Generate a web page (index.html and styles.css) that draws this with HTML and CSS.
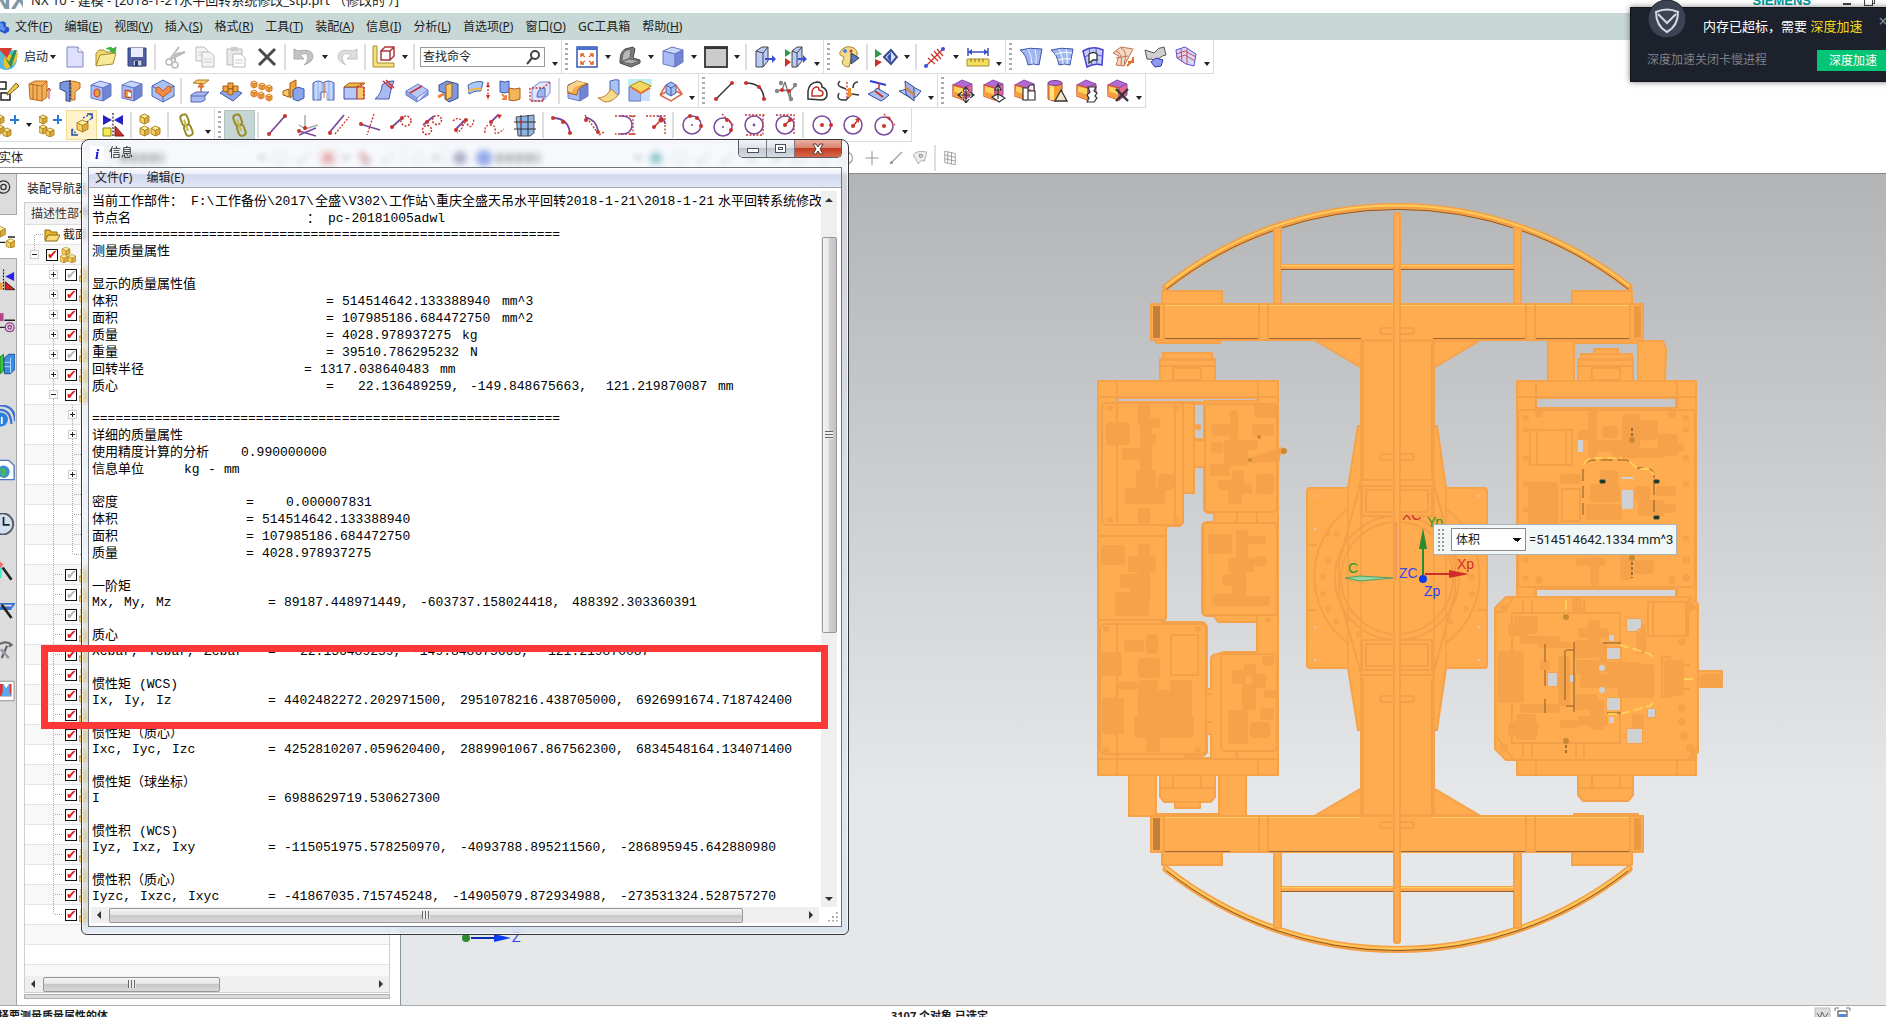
FILE: index.html
```html
<!DOCTYPE html>
<html lang="zh-CN">
<head>
    <meta charset="UTF-8">
    <meta name="viewport" content="width=device-width, initial-scale=1.0">
    <title>NX 10 - 建模</title>
    <link rel="stylesheet" href="styles.css">
</head>
<body>
    <header class="titlebar">
        <span class="nx-mark">NX</span>
        <span class="title-text">NX 10 - 建模 - [2018-1-21水平回转系统修改_stp.prt （修改的 ）]</span>
        <span class="siemens">SIEMENS</span>
        <span class="app-min"></span>
        <span class="app-restore"></span>
    </header>

    <nav class="menubar" id="menubar">
        <svg class="menu-logo" viewBox="0 0 12 18"><path d="M0 3l4-1 3 2v4l4 2v4l-5 3-6-3z" fill="#2456c8"/><path d="M0 4l4 1v4l3 1-2 4-5-2z" fill="#5f93ee"/></svg>
    </nav>

    <div class="toolbar" id="bar1"></div>
    <div class="toolbar" id="bar2"></div>
    <div class="toolbar" id="bar3"></div>
    <div class="toolbar selection-bar" id="bar4"></div>

    <main class="workspace">
        <div class="resource-bar" id="resources"></div>
        <aside class="navigator">
            <h2 class="nav-title">装配导航器</h2>
            <div class="tree">
                <div class="tree-head">描述性部件名</div>
                <div class="tree-rows" id="tree"></div>
                <div class="scroll-h">
                    <i class="arrow left"></i>
                    <div class="thumb nav-thumb"><i class="ridges"></i></div>
                    <i class="arrow right"></i>
                </div>
            </div>
            <div class="nav-foot"></div>
        </aside>
        <section class="viewport">
            <svg id="model" viewBox="401 174 1485 831" preserveAspectRatio="xMinYMin meet">
                <defs>
                    <clipPath id="half"><rect x="1400" y="515" width="24" height="10"/></clipPath>
                </defs>
                <!-- arched rails -->
                <g fill="none" stroke-linecap="round">
                    <path class="rail" d="M1166 287A373 373 0 0 1 1629 287M1166 869A373 373 0 0 0 1629 869"/>
                    <path class="rail-dark" d="M1167 289A373 373 0 0 1 1628 289M1167 871A373 373 0 0 0 1628 871"/>
                    <path class="rail-light" d="M1166 286A373 373 0 0 1 1629 286M1166 868A373 373 0 0 0 1629 868"/>
                </g>
                <g class="body">
                    <path d="M1274 228h7v76h-7zM1514 228h7v76h-7zM1274 852h7v76h-7zM1514 852h7v76h-7z"/>
                    <path d="M1281 265h233v4H1281zM1281 887h233v4H1281z"/>
                    <!-- upper beam and column -->
                    <path d="M1162 291h60v13h-60zM1572 291h60v13h-60zM1162 852h60v13h-60zM1572 852h60v13h-60z"/>
                    <path d="M1156 340h64v3h-64zM1574 340h64v3h-64zM1156 814h64v3h-64zM1574 814h64v3h-64z"/>
                    <path d="M1316 341h163l-44 26h-75zM1316 815h163l-44-26h-75z"/>
                    <rect x="1307" y="488" width="180" height="180" rx="3"/>
                    <path d="M1358 426h79l9 62v180l-9 62h-79l-10-62v-180z"/>
                    <rect x="1361" y="341" width="73" height="474"/>
                    <rect x="1151" y="304" width="492" height="36"/>
                    <rect x="1151" y="816" width="492" height="36"/>
                    <!-- left frame -->
                    <path d="M1129 775h27v41h-27zM1219 775h27v41h-27zM1160 359h55v22h-55zM1163 353h49v7h-49zM1160 775h55v22l-4 5h-47l-4-5zM1175 802h25v6h-25z"/>
                    <path fill-rule="evenodd" d="M1098 381h180v394h-180zM1117 398v4h83v2l5-3h52v-3zM1194 404v35h10v-35zM1194 467V493H1183V522L1180 526H1166V618L1162 622H1200Q1207 622 1207 629V689H1211V660Q1211 654 1218 654L1224 652H1257V622H1218L1214 616H1207Q1202 616 1202 610V528Q1202 522 1208 522H1214V513H1210Q1204 513 1204 507V467zM1207 734v18q-1 4-7 4h-15v2h26v-24z"/>
                    <!-- right frame -->
                    <path d="M1548 341h26v40h-26zM1638 341h25l3 8-1 32h-27zM1578 359h55v22h-55zM1581 354h51v6h-51zM1594 349h24v5h-24zM1578 775h55v20l-5 6h-45l-5-6zM1698 671h24v16h-24z"/>
                    <path fill-rule="evenodd" d="M1517 381h179v394h-179zM1536 398v10h140v-10zM1536 589v8h140v-8z"/>
                    <path fill-rule="evenodd" d="M1506 597h184l8 7v148l-8 8h-184l-11-11v-141zM1627 619v12h10l4-5v-7zM1607 648v11h14v-11zM1607 698v11h14v-11zM1548 673v13h9v-13zM1627 729v14h15v-14zM1648 709v8h7v-8zM1609 635v6h5v-6zM1570 675v7h5v-7zM1600 667v4h5v-4zM1600 688v4h5v-4z"/>
                </g>
                <path fill="#9b6534" d="M1281 269h233v1h-233zM1281 891h233v1h-233zM1165 338h94v1h-94zM1268 338h93v1h-93zM1433 338h93v1h-93zM1535 338h94v1h-94zM1165 851h65v1h-65zM1268 851h258v1h-258zM1535 851h94v1h-94z"/>
                <path fill="#ffd05a" d="M1165 305h464v1h-464zM1165 817h194v1h-194zM1433 817h196v1h-196zM1281 265h233v1h-233zM1281 887h233v1h-233z"/>
                <path fill="#c17f39" d="M1153 306h7v32h-7zM1153 818h7v32h-7z"/>
                <path fill="#eb9943" d="M1634 306h7v32h-7zM1634 818h7v32h-7z"/>
                <g class="seam">
                    <path d="M1164 304v36M1259 304v36M1268 304v36M1526 304v36M1535 304v36M1630 304v36M1164 816v36M1259 816v36M1268 816v36M1526 816v36M1535 816v36M1630 816v36"/>
                    <path d="M1363 341v138M1432 341v138M1363 678v137M1432 678v137M1361 480h73M1361 675h73"/>
                    <rect x="1362" y="486" width="70" height="30"/><rect x="1366" y="490" width="62" height="22"/>
                    <rect x="1362" y="640" width="70" height="30"/><rect x="1366" y="644" width="62" height="22"/>
                    <circle cx="1397" cy="578" r="56"/><circle cx="1397" cy="578" r="62"/>
                    <path d="M1349 508a84 84 0 0 0 0 136M1445 508a84 84 0 0 1 0 136M1361 480l-22 84v30l22 80M1433 480l22 84v30l-22 80M1307 545h10M1307 610h10M1477 545h10M1477 610h10"/>
                    <rect x="1380" y="454" width="34" height="6" rx="3"/><rect x="1380" y="696" width="34" height="6" rx="3"/>
                    <rect x="1380" y="328" width="34" height="6" rx="3"/><rect x="1380" y="822" width="34" height="6" rx="3"/>
                    <path d="M1098 397h180M1117 381v21M1258 381v22M1098 759h180M1117 759v16M1258 759v16M1117 402v120M1117 622v136"/>
                    <path d="M1517 397h179M1536 381v27M1677 381v27M1517 760h179M1536 760v15M1677 760v15M1536 589v8M1677 589v8"/>
                    <rect x="1102" y="403" width="81" height="122" rx="4"/><rect x="1183" y="403" width="11" height="90"/>
                    <path d="M1175 403v122M1194 440h10M1194 467h10"/>
                    <rect x="1205" y="404" width="72" height="108" rx="4"/><rect x="1098" y="536" width="68" height="84" rx="3"/>
                    <rect x="1203" y="523" width="74" height="92" rx="3"/><rect x="1100" y="624" width="106" height="130" rx="5"/>
                    <rect x="1221" y="654" width="56" height="97" rx="4"/><path d="M1257 615v38M1237 513v10M1257 513v10M1237 751v8M1204 694h8M1204 722h8"/>
                    <rect x="1171" y="635" width="27" height="40"/><rect x="1173" y="368" width="28" height="12"/><rect x="1173" y="775" width="28" height="13"/>
                    <rect x="1592" y="368" width="28" height="12"/><rect x="1592" y="775" width="28" height="13"/>
                    <path d="M1160 366h55M1578 366h55M1160 788h55M1578 788h55"/>
                    <rect x="1518" y="410" width="177" height="177" rx="4"/><rect x="1530" y="430" width="42" height="35"/><path d="M1537 430v35M1566 430v35"/>
                    <rect x="1562" y="489" width="18" height="32"/><path d="M1495 612h8l10-14M1497 737l16 22M1698 612l-10-14M1698 747l-10 12"/>
                    <rect x="1512" y="613" width="108" height="130"/><rect x="1648" y="602" width="40" height="34"/><path d="M1653 602v34M1686 602v34M1523 600v12M1532 600v12M1576 600v12M1584 600v12M1523 745v12M1532 745v12M1576 745v12M1584 745v12"/>
                    <path d="M1690 665h-20v-8h-8v40h8v-8h20M1698 679h16"/>
                </g>
                <g class="lump" id="lumps"></g>
                <g fill="#cfd1d3">
                    <path d="M1578 440h5v12h-5zM1622 490h11v19h-11zM1622 477h11v2h-11zM1627 619h14v8l-5 4h-9zM1607 648h13v11h-13zM1607 698h13v12h-13zM1548 673h9v13h-9zM1627 729h15v14h-15zM1648 709h7v8h-7zM1609 635h5v6h-5zM1609 717h5v6h-5zM1570 675h4v7h-4z"/>
                    <circle cx="1602" cy="668" r="3"/><circle cx="1602" cy="690" r="3"/>
                    <circle cx="1315" cy="496" r="1"/><circle cx="1315" cy="529" r="1"/><circle cx="1315" cy="627" r="1"/><circle cx="1315" cy="660" r="1"/><circle cx="1479" cy="496" r="1"/><circle cx="1479" cy="627" r="1"/><circle cx="1479" cy="660" r="1"/>
                </g>
                <!-- hoses and probes -->
                <g fill="none" stroke="#8a5a26">
                    <path stroke-dasharray="12 5" d="M1583 515v-45q1-10 12-10h32l10 8h10q7 1 7 8v40"/>
                    <path d="M1545 644v18M1545 670v16M1545 699v14M1565 650v50M1574 642v70M1566 650h8M1566 706h8M1607 713h14M1603 643h18" />
                </g>
                <path fill="none" stroke="#ffcf58" stroke-width="2" stroke-dasharray="9 4" d="M1584 465q2-6 10-7h28M1630 462l8 7h12l4 6M1620 645l14 4 16 5 5 6M1608 714h12l30-8 6-7M1566 600v14M1684 679h9"/>
                <path fill="#0f2f2a" stroke="#3d4d35" d="M1600 480h5v3h-5zM1654 480h5v3h-5zM1654 516h5v3h-5z"/>
                <g fill="#c98a35"><circle cx="1632" cy="440" r="3"/><circle cx="1632" cy="558" r="3"/><circle cx="1566" cy="617" r="3"/><circle cx="1566" cy="741" r="3"/><circle cx="1284" cy="451" r="3"/><circle cx="1259" cy="437" r="2"/><circle cx="1250" cy="460" r="2"/></g>
                <path stroke="#40301c" stroke-dasharray="3 2" d="M1632 428v8M1632 562v16M1566 745v10"/>
                <rect class="post" x="1394" y="213" width="6" height="730" rx="2"/>
                <!-- coordinate systems -->
                <path d="M1396 522v58" stroke="#dc8a78" stroke-width="1"/>
                <path d="M1345 578l15-2 33 2-33 3z" fill="#8fd8a0" stroke="#5c9e62"/>
                <g class="axis-name">
                    <text x="1348" y="573" fill="#1f9a1f">C</text>
                    <text x="1399" y="578" fill="#3a46f0">ZC</text>
                    <text x="1402" y="520" fill="#d03030" clip-path="url(#half)">XC</text>
                    <text x="1427" y="527" fill="#1f9a1f">Yp</text>
                    <text x="1457" y="569" fill="#d03030">Xp</text>
                    <text x="1424" y="596" fill="#2a40f0">Zp</text>
                    <text x="512" y="942" fill="#2a40f0">Z</text>
                </g>
                <path d="M1423 575v-30" stroke="#2b8a2b" stroke-width="2"/><path d="M1423 528l4 21h-8z" fill="#2b8a2b"/>
                <path d="M1425 574h28" stroke="#d02c2c" stroke-width="2"/><path d="M1449 570l20 4-20 4z" fill="#d02c2c"/>
                <circle cx="1423" cy="579" r="4" fill="#0a3cf0"/>
                <circle cx="466" cy="938" r="4" fill="#2b8a2b"/><path d="M471 938h24" stroke="#0a2cb0" stroke-width="2"/><path d="M494 934l17 4-17 4z" fill="#0a3cf0"/>
            </svg>
            <form class="measure-box">
                <i class="grip-dots"></i>
                <label class="sr-only" for="measure">测量</label>
                <select id="measure"><option>体积</option></select>
                <output for="measure">=514514642.1334 mm^3</output>
            </form>
        </section>
    </main>

    <footer class="statusbar">
        <span class="prompt">选择要测量质量属性的体</span>
        <span class="selected">3107 个对象 已选定</span>
        <svg class="status-icons" viewBox="0 0 40 18"><rect x="1" y="1" width="15" height="15" fill="#ddd" stroke="#bbb"/><path d="M3 6l3 5 2-6 3 6 3-5" stroke="#666" fill="none"/><path d="M21 4V1h4M32 1h4v3" stroke="#777" fill="none"/><rect x="24" y="4" width="9" height="10" fill="#fff" stroke="#333"/><rect x="25" y="7" width="7" height="7" fill="#4d86d8"/></svg>
    </footer>

    <section class="window">
        <header class="window-title">
            <span class="info-icon">i</span>
            <h1>信息</h1>
            <div class="window-buttons">
                <button type="button" aria-label="最小化"><i class="glyph-min"></i></button>
                <button type="button" aria-label="最大化"><i class="glyph-max"></i></button>
                <button type="button" class="close" aria-label="关闭"><svg viewBox="0 0 14 12"><path d="M2 1h3l2 3 2-3h3L9 6l3 5H9L7 8l-2 3H2l3-5z" fill="#fff" stroke="#5a3a3a"/></svg></button>
            </div>
        </header>
        <div class="window-client">
            <nav class="window-menu">
                <button type="button">文件(F)</button>
                <button type="button">编辑(E)</button>
            </nav>
            <div class="window-body">
                <div class="listing" id="listing"></div>
                <div class="scroll-v">
                    <i class="arrow up"></i>
                    <div class="thumb listing-thumb"><i class="ridges"></i></div>
                    <i class="arrow down"></i>
                </div>
            </div>
            <div class="window-foot">
                <div class="scroll-h">
                    <i class="arrow left"></i>
                    <div class="thumb wide-thumb"><i class="ridges"></i></div>
                    <i class="arrow right"></i>
                </div>
                <i class="size-grip"></i>
            </div>
        </div>
    </section>

    <div class="highlight"></div>

    <aside class="toast">
        <svg class="toast-logo" viewBox="0 0 40 40"><circle cx="20" cy="20" r="19" fill="#3c4453" stroke="#1b2029"/><path d="M9 13q11-5 22 0 0 14-11 20Q9 27 9 13z" fill="none" stroke="#d5d9e6" stroke-width="2"/><path d="M11 15l9 9 9-9" fill="none" stroke="#d5d9e6" stroke-width="2"/></svg>
        <p class="toast-title">内存已超标，需要 <em>深度加速</em></p>
        <button type="button" class="toast-close" aria-label="关闭">×</button>
        <p class="toast-note">深度加速关闭卡慢进程</p>
        <button type="button" class="toast-action">深度加速</button>
    </aside>

    <script src="app.js"></script>
</body>
</html>
```

FILE: styles.css
```css
* {
    box-sizing: border-box;
}
body {
    margin: 0;
    height: 100vh;
    overflow: hidden;
    display: flex;
    flex-direction: column;
    position: relative;
    background: #fff;
    color: #1c1c1c;
    font: 12px/16px "Noto Sans", "Noto Sans CJK SC", sans-serif;
}
button, select, input {
    font: inherit;
    color: inherit;
}
button {
    padding: 0;
    border: 0;
    background: none;
}
h1, h2, p {
    margin: 0;
    font-weight: normal;
}
svg {
    display: block;
}
.sr-only {
    position: absolute;
    width: 1px;
    height: 1px;
    overflow: hidden;
    clip-path: inset(50%);
}

/* title and menu */
.titlebar {
    flex: none;
    display: flex;
    align-items: center;
    height: 26px;
    margin-top: -13px;
    padding-right: 13px;
    font-size: 13px;
    white-space: nowrap;
}
.nx-mark {
    width: 31px;
    margin-left: -8px;
    color: #7f98a5;
    font: bold 26px/26px "Liberation Sans", sans-serif;
    overflow: hidden;
}
.title-text {
    flex: 1;
    padding-left: 8px;
}
.siemens {
    color: #009999;
    font: bold 13px/13px "Liberation Sans", sans-serif;
    margin-right: 32px;
}
.app-min {
    width: 8px;
    height: 2px;
    margin: 8px 13px 0 0;
    background: #444;
}
.app-restore {
    width: 9px;
    height: 8px;
    margin: 4px 0 0;
    border: 1px solid #444;
    box-shadow: 2px -2px 0 -1px #fff, 2px -2px 0 0 #444;
}
.menubar {
    flex: none;
    display: flex;
    align-items: center;
    gap: 12px;
    height: 27px;
    background: #c8d8d6;
}
.menu-logo {
    width: 10px;
    height: 16px;
    margin-right: -7px;
}

/* toolbars */
.toolbar {
    flex: none;
    display: flex;
    height: 34px;
}
.group {
    display: flex;
    align-items: center;
    border: solid #dcdcdc;
    border-width: 0 1px 1px 0;
}
.tool {
    width: 31px;
    height: 30px;
    display: flex;
    align-items: center;
    justify-content: center;
}
.tool svg {
    width: 24px;
    height: 24px;
}
.toolbar > .group:first-child .tool:first-child {
    margin-left: -8px;
}
.tool.hot {
    background: #fff1c9;
    border: 1px solid #f5d98a;
}
.tool.on {
    background: #c5d6d4;
    border: 1px solid #b3c5c3;
}
.launch {
    display: flex;
    align-items: center;
    width: 47px;
    gap: 4px;
    white-space: nowrap;
}
.launch svg {
    flex: none;
    width: 20px;
    height: 26px;
}
.caret, .more {
    width: 12px;
    height: 4px;
    display: flex;
    justify-content: center;
}
.caret::before, .more::before {
    content: "";
    border: 3px solid transparent;
    border-top: 4px solid #222;
    border-bottom: 0;
}
.more {
    margin-top: 14px;
}
.sep {
    width: 2px;
    height: 26px;
    margin: 0 2px;
    background: #dedede;
}
.grip {
    width: 3px;
    height: 27px;
    margin: 0 3px;
    background: repeating-linear-gradient(#aaa 0 2px, transparent 2px 5px);
}
.finder {
    display: flex;
    align-items: center;
    width: 125px;
    height: 20px;
    margin: 0 4px 0 3px;
    border: 1px solid #9a9a9a;
}
.finder input {
    width: 100px;
    padding: 0 2px;
    border: 0;
    outline: 0;
}
.finder input::placeholder {
    color: #1c1c1c;
    opacity: 1;
}
.finder svg {
    width: 16px;
    height: 16px;
    margin-left: 4px;
}
.selection-bar {
    height: 31px;
}
.selection-bar .group {
    border: 0;
}
.filter {
    width: 120px;
    height: 20px;
    margin: 0 8px 0 -8px;
    padding: 0 6px;
    border: 1px solid #9a9a9a;
    background: #fff;
    appearance: none;
}
.selection-bar .tool {
    width: 24px;
}
.selection-bar .tool svg {
    width: 18px;
    height: 18px;
}
.smear {
    width: 44px;
    height: 10px;
    margin-right: 92px;
    background: repeating-linear-gradient(90deg, #777 0 7px, #eee 7px 10px);
}

/* workspace */
.workspace {
    flex: 1;
    display: flex;
    min-height: 0;
    border-top: 1px solid #87898c;
}
.resource-bar {
    width: 17px;
    background: #dcdcdc;
    border-right: 1px solid #a8a8a8;
}
.resource {
    display: flex;
    align-items: center;
    width: 16px;
    height: 40px;
}
.resource.tall {
    height: 54px;
}
.resource.mid {
    height: 42px;
}
.resource.current {
    height: 45px;
    width: 17px;
    background: #fff;
    border: solid #a8a8a8;
    border-width: 1px 0;
}
.resource:first-child {
    align-items: flex-start;
    padding-top: 2px;
}
.resource.mid + .tall {
    margin-top: 4px;
}
.resource svg {
    width: 15px;
    height: 22px;
}
.navigator {
    display: flex;
    flex-direction: column;
    width: 384px;
    padding: 6px 10px 6px 7px;
    border-right: 1px solid #87959c;
    background: #fff;
}
.nav-title {
    padding: 0 3px;
    font-size: 12px;
    line-height: 17px;
}
.tree {
    flex: 1;
    display: flex;
    flex-direction: column;
    min-height: 0;
    margin-top: 5px;
    border: 1px solid #cfcfcf;
}
.tree-head {
    height: 22px;
    padding: 0 6px;
    border-bottom: 1px solid #ddd;
    background: #f3f3f3;
    font-size: 12px;
    line-height: 21px;
    color: #333;
}
.tree-rows {
    flex: 1;
    min-height: 0;
    overflow: hidden;
}
.tree-row {
    display: flex;
    align-items: center;
    height: 20px;
    border-bottom: 1px solid #e4e4e4;
    line-height: 18px;
}
.tree-row:nth-child(even) {
    background: #f8f8f8;
}
.cell {
    display: flex;
    align-items: center;
    justify-content: center;
    align-self: stretch;
    width: 19px;
    background: repeating-linear-gradient(#aaa 0 1px, transparent 1px 2px) 9px 0 / 1px 100% no-repeat;
}
.cell.none {
    background: none;
}
.cell.start {
    background-position: 9px 10px;
}
.cell.end {
    background-size: 1px 10px;
}
.cell.twig::after {
    content: "";
    width: 8px;
    height: 1px;
    margin-left: 10px;
    background: repeating-linear-gradient(90deg, #aaa 0 1px, transparent 1px 2px);
}
.toggle {
    width: 9px;
    height: 9px;
    border: 1px solid #cfcfcf;
    background: linear-gradient(#222, #222) center / 5px 1px no-repeat, #fff;
}
.toggle.plus {
    background: linear-gradient(#222, #222) center / 5px 1px no-repeat, linear-gradient(#222, #222) center / 1px 5px no-repeat, #fff;
}
.tree-row input {
    appearance: none;
    width: 12px;
    height: 12px;
    margin: 0 2px;
    border: 1px solid #111;
    background: #fff;
    font: bold 13px/10px "DejaVu Sans", sans-serif;
    color: #e01414;
}
.tree-row input::before {
    content: "✔";
}
.tree-row input:disabled {
    color: #b5b5b5;
}
.tree-row svg {
    width: 16px;
    height: 16px;
}
.tree-row .folder {
    margin-right: 3px;
}
.nav-foot {
    height: 5px;
    margin-top: 1px;
    border: 1px solid #b0b0b0;
    background: #dcdcdc;
}
.viewport {
    flex: 1;
    position: relative;
    min-width: 0;
    overflow: hidden;
    background: linear-gradient(#b3b4b6, #e6e7e9 75%);
}
#model {
    width: 100%;
    height: 100%;
}

/* model shading */
.rail {
    stroke: #f4a045;
    stroke-width: 7;
}
.rail-dark {
    stroke: #8f5c28;
    stroke-width: 1;
}
.rail-light {
    stroke: #ffcb5c;
    stroke-width: 2;
}
.body {
    fill: #ffab4f;
    stroke: #f6a24b;
    stroke-width: 2;
    stroke-linejoin: round;
}
.seam {
    fill: none;
    stroke: #f3a04a;
    stroke-width: 2;
}
.lump {
    fill: #f6a24b;
}
.post {
    fill: #ffab4f;
    stroke: #f3a04a;
    stroke-width: 2;
}
.axis-name {
    font: 14px "Liberation Sans", sans-serif;
}
.measure-box {
    position: absolute;
    left: 1032px;
    top: 350px;
    display: flex;
    align-items: center;
    width: 244px;
    height: 31px;
    padding: 0 3px;
    border: 1px solid #a9b2b4;
    background: #f1f6f6;
}
.grip-dots {
    flex: none;
    width: 8px;
    height: 23px;
    margin-right: 6px;
    background: radial-gradient(circle, #999 1px, transparent 1px) 0 0 / 4px 4px;
}
.measure-box select {
    flex: none;
    width: 75px;
    height: 23px;
    padding: 0 4px;
    border: 1px solid #8c8c8c;
    border-radius: 0;
    appearance: none;
    background: conic-gradient(from -45deg at 50% 4px, #111 90deg, transparent 0) 61px 9px / 8px 4px no-repeat, #fff;
}
.measure-box output {
    margin-left: 3px;
    font: 13px/16px "Roboto", sans-serif;
    white-space: nowrap;
}

/* scroll bars */
.scroll-h, .scroll-v {
    display: flex;
    align-items: center;
    background: #efefef;
}
.scroll-h {
    flex: 1;
    height: 16px;
}
.tree .scroll-h {
    flex: none;
}
.scroll-v {
    flex-direction: column;
    width: 16px;
    margin-right: 4px;
}
.thumb {
    display: flex;
    align-items: center;
    justify-content: center;
    border: 1px solid #979797;
    border-radius: 2px;
}
.scroll-h .thumb {
    height: 15px;
    background: linear-gradient(#f4f4f4, #e2e2e2 50%, #c8c8ca 50%, #d8d8da);
}
.scroll-v .thumb {
    width: 15px;
    background: linear-gradient(90deg, #f4f4f4, #e6e6e6 50%, #cfcfd1 50%, #c4c4c6);
}
.nav-thumb {
    width: 177px;
}
.wide-thumb {
    width: 634px;
}
.listing-thumb {
    height: 396px;
    margin-top: 29px;
}
.ridges {
    width: 8px;
    height: 8px;
    background: repeating-linear-gradient(90deg, #666 0 1px, #eee 1px 3px);
}
.scroll-v .ridges {
    background: repeating-linear-gradient(#666 0 1px, #eee 1px 3px);
}
.arrow {
    border: 4px solid transparent;
}
.arrow.left {
    margin: 0 8px 0 6px;
    border-right-color: #333;
    border-left-width: 0;
}
.arrow.right {
    margin: 0 6px 0 auto;
    border-left-color: #333;
    border-right-width: 0;
}
.arrow.up {
    margin: 7px 0 6px;
    border-bottom-color: #333;
    border-top-width: 0;
}
.arrow.down {
    margin: auto 0 6px;
    border-top-color: #333;
    border-bottom-width: 0;
}

/* status */
.statusbar {
    flex: none;
    display: flex;
    height: 12px;
    border-top: 1px solid #a9acae;
    font-size: 11px;
    font-weight: bold;
    overflow: hidden;
}
.statusbar span {
    line-height: 20px;
}
.prompt {
    width: 904px;
    margin-left: -13px;
    white-space: nowrap;
}
.status-icons {
    width: 40px;
    height: 18px;
    margin: 1px 32px 0 auto;
}

/* information window */
.window {
    position: absolute;
    left: 81px;
    top: 139px;
    width: 768px;
    height: 796px;
    display: flex;
    flex-direction: column;
    padding: 0 6px 7px;
    border: 1px solid #34383d;
    border-radius: 8px 8px 6px 6px;
    background: linear-gradient(rgba(238, 243, 250, .5), rgba(214, 226, 240, .6));
    backdrop-filter: blur(3px);
    box-shadow: inset 0 0 0 1px rgba(255, 255, 255, .7);
}
.window-title {
    flex: none;
    display: flex;
    height: 27px;
    padding-left: 2px;
}
.info-icon {
    width: 14px;
    height: 16px;
    margin: 6px 5px 0 0;
    background: #fff;
    color: #1414e0;
    text-align: center;
    font: italic bold 15px/16px "Liberation Serif", serif;
}
.window-title h1 {
    margin-top: 5px;
    font-size: 12px;
    line-height: 16px;
}
.window-buttons {
    display: flex;
    height: 18px;
    margin-left: auto;
    border: 1px solid #585d66;
    border-top: 0;
    border-radius: 0 0 5px 5px;
    overflow: hidden;
}
.window-buttons button {
    display: flex;
    align-items: center;
    justify-content: center;
    width: 28px;
    border-right: 1px solid #777c85;
    background: linear-gradient(#f3f5f8, #dfe3e9 45%, #bfc6d0 50%, #d8dde4);
}
.window-buttons .close {
    width: 46px;
    border: 0;
    background: linear-gradient(#e9b0a2, #d98670 45%, #c23b22 50%, #d8694c);
}
.window-buttons svg {
    width: 14px;
    height: 12px;
}
.glyph-min {
    width: 12px;
    height: 5px;
    margin-top: 4px;
    border: 1px solid #4a4f5c;
    background: #fff;
}
.glyph-max {
    width: 11px;
    height: 9px;
    border: 1px solid #4a4f5c;
    background: #fff;
    box-shadow: inset 0 0 0 2px #fff, inset 0 0 0 3px #4a4f5c;
}
.window-client {
    flex: 1;
    display: flex;
    flex-direction: column;
    min-height: 0;
    padding-bottom: 3px;
    border: 1px solid #70757d;
    background: #fff;
}
.window-menu {
    display: flex;
    gap: 14px;
    height: 20px;
    padding: 0 6px;
    border-bottom: 1px solid #a4a7ae;
    background: linear-gradient(#fdfdfe, #edf0f8 30%, #d4daee 35%, #e0e6f6);
}
.window-body {
    flex: 1;
    display: flex;
    min-height: 0;
    padding-top: 3px;
}
.listing {
    flex: 1;
    min-width: 0;
    padding: 1px 0 0 3px;
    overflow: hidden;
    white-space: pre;
    color: #000;
    font-family: "Liberation Mono", "Noto Sans CJK SC", monospace;
    font-size: 13px;
}
.line {
    display: flex;
    height: 16px;
    line-height: 18px;
}
.line.cjk {
    height: 17px;
    line-height: 19px;
}
.run {
    flex: none;
}
.window-foot {
    display: flex;
    padding-left: 2px;
}
.size-grip {
    width: 22px;
    height: 16px;
    background: radial-gradient(circle, #aaa 1px, transparent 1px) 4px 4px / 4px 4px;
    clip-path: polygon(85% 20%, 85% 90%, 30% 90%);
}
.highlight {
    position: absolute;
    left: 41px;
    top: 645px;
    width: 787px;
    height: 84px;
    border: 7px solid #fb3737;
    pointer-events: none;
}

/* memory notice */
.toast {
    position: absolute;
    right: -24px;
    top: 7px;
    width: 280px;
    height: 75px;
    padding: 11px 20px 0 16px;
    display: grid;
    grid-template-columns: 56px 1fr auto;
    grid-template-rows: 31px 21px;
    background: #1d212c;
    border: 1px solid #10131a;
    box-shadow: 0 0 6px rgba(0, 0, 0, .5);
    color: #fff;
}
.toast-logo {
    width: 40px;
    height: 40px;
    margin-top: -20px;
}
.toast-title {
    font-size: 13px;
    line-height: 15px;
    white-space: nowrap;
}
.toast-title em {
    font-style: normal;
    color: #f7da1c;
}
.toast-close {
    align-self: start;
    color: #888d98;
    font-size: 16px;
    line-height: 4px;
}
.toast-note {
    grid-column: 1 / 3;
    color: #7c808a;
    line-height: 20px;
    white-space: nowrap;
}
.toast-action {
    width: 72px;
    height: 21px;
    margin-left: -60px;
    background: #04c476;
    line-height: 20px;
}
```

FILE: app.js
```js
// ---- icon drawing helpers, everything sits on a 24x24 grid ----
const p = (d, fill = 'none', stroke = 'none', w = 1) =>
    `<path d="${d}" fill="${fill}" stroke="${stroke}" stroke-width="${w}"/>`;
const dot = (x, y, r = 2, c = '#c8332b') => `<circle cx="${x}" cy="${y}" r="${r}" fill="${c}"/>`;
const ring = (x, y, r, c = '#7b4a9c', dash = '') =>
    `<circle cx="${x}" cy="${y}" r="${r}" fill="none" stroke="${c}" stroke-width="1.5" stroke-dasharray="${dash}"/>`;
const cube = (top = '#c9d6fa', left = '#a9bbf5', right = '#7385d2', edge = '#6678c4') =>
    p('M2 6l9-4 11 3-8 4z', top, edge) + p('M2 6l12 3v13L2 19z', left, edge) + p('M14 9l8-4v12l-8 5z', right, edge);
const box = (x, y, s = 8) => {
    const a = s / 2;
    const b = s / 4;
    return p(`M${x} ${y + b}l${a}-${b} ${a} ${b}-${a} ${b}z`, '#fdeea0', '#b08a28') +
        p(`M${x} ${y + b}l${a} ${b}v${a + 1}l-${a}-${b}z`, '#f4cf5e', '#b08a28') +
        p(`M${x + a} ${y + a}l${a}-${b}v${a + 1}l-${a} ${b}z`, '#e0a93a', '#b08a28');
};
const V = '#7b4a9c';
const R = '#c8332b';
const dash = (d, c = R) => `<path d="${d}" fill="none" stroke="${c}" stroke-width="1.3" stroke-dasharray="2 1.5"/>`;
const face = p('M2 6l9-5 10 4-8 4z', '#b06ad0', '#8a4ab0') + p('M2 6l11 3v12L2 17z', '#f9d55c', '#d8503c', 1.3) +
    p('M2 12l11 4v5L2 17z', '#f5a040') + p('M13 9l8-4v11l-8 5z', '#e8688c', '#8a4ab0');

const icons = {
    new: p('M4 2h11l5 5v15H4z', '#dfe0fb', '#8286c4') + p('M15 2v5h5', '#fff', '#8286c4'),
    open: p('M2 8l3-3h5l2 2h8v4L6 12 2 20z', '#f0d873', '#a98e2c') + p('M2 21l4-11 16-2-3 11z', '#f7e89a', '#a98e2c') + p('M12 4q6-4 8 2M22 2l-1 6-5-2z', '#3fae3f', '#3fae3f'),
    save: p('M3 3h18v18H3z', '#4f5fa8', '#333c70') + p('M6 3h12v9H6z', '#e8ecfa') + p('M8 15h9v6H8z', '#c9cce0', '#333c70') + p('M10 16h3v5h-3z', '#333c70'),
    cut: ring(7, 17, 3, '#bbb') + ring(13, 20, 3, '#bbb') + p('M8 14L17 2M13 17l0-8M9 14l14-7M23 7l-9 2', 'none', '#bcbcbc', 2),
    copy: p('M3 2h8l4 4v10H3z', '#f4f4f4', '#bbb') + p('M9 7h8l4 4v11H9z', '#f4f4f4', '#bbb') + p('M5 7h6M5 10h4M11 14h8M11 17h8', 'none', '#ccc'),
    paste: p('M3 4h15v16H3z', '#e9e9e9', '#bbb') + p('M7 2h7v4H7z', '#ccc') + p('M9 9h8l4 4v9H9z', '#fff', '#bbb') + p('M11 15h8M11 18h8', 'none', '#ccc'),
    del: p('M4 4l16 16M20 4L4 20', 'none', '#4a4a4a', 3),
    undo: p('M2 4v10h10l-4-4q8-4 8 3-1 5-4 7 9-3 9-9-1-8-15-5z', '#c4c4c4', '#aaa'),
    redo: p('M22 4v10H12l4-4q-8-4-9 3 1 5 4 7-8-3-8-9 1-8 15-5z', '#dedede', '#c4c4c4'),
    wcs: p('M1 1h4v17h17v4H1z', '#f5df7c', '#a98e2c') + p('M9 6h9v9H9zM9 6l4-4h9v9l-4 4M18 6l4-4', 'none', '#b0353a', 1.5),
    fit: p('M2 2h20v20H2z', '#fff', '#3457b0', 1.5) + p('M2 2h20v3H2z', '#4a72cc') + p('M6 9l4 3M18 9l-4 3M6 19l4-3M18 19l-4-3M6 12V9h3M18 12V9h-3M6 16v3h3M18 16v3h-3', 'none', '#e06a30', 1.5),
    bracket: p('M2 16q0-9 5-12l8-2 2 2-2 9 7 2v3l-9 4-11-4z', '#7c7c7c', '#4a4a4a') + p('M4 14q1-8 5-9l4-1-1 9-7 3z', '#b8b8b8', '#666') + p('M3 17l8-3 11 2-9 3z', '#b0b0b0', '#666'),
    cube: cube(),
    frame: p('M1 2h22v20H1z', '#cbcbcb', '#444', 2) + p('M1 2h22v2H1z', '#333'),
    section: p('M3 6l6-4h6v14l-5 6H3z', '#b9cbf6', '#444') + p('M10 8l5-6M10 8v14M3 6l7 2', 'none', '#444') + p('M12 13h7v-3l4 4-4 4v-3h-7z', '#3a50d8'),
    section2: p('M1 4l6 4-6 4z', '#2e9a46') + p('M1 13l6 4-6 5z', R) + p('M8 6l5-4h5v14l-5 6H8z', '#b9cbf6', '#444') + p('M13 8v14M8 6l5 2 5-6', 'none', '#444') + p('M14 13h5v-3l4 4-4 4v-3h-5z', '#3a50d8'),
    palette: p('M3 7q5-8 14-4 6 5 1 10l-4 1-2 8q-6 0-7-5 3-4 1-6-4 0-3-4z', '#f2dc8c', '#a2862c') + dot(8, 6, 2, '#4d86d8') + dot(14, 6, 1.5, '#c33') + p('M14 8l8 5-8 6z', '#5c78c8', '#333'),
    showhide: p('M1 4l7 5-7 4z', '#2e9a46') + p('M1 14l7 3-7 5z', R) + p('M10 12l7-7 6 7-6 7z', '#d5e2fa', '#3a4b88', 2) + p('M17 7v11l-4-6z', '#3a50b8'),
    measure: p('M3 21L21 3M8 9l7 7M5 13l7 6M11 6l7 8M14 4l6 7', 'none', R, 1.2) + dot(3, 21, 2, '#3a50d8') + dot(20, 4, 2, '#3a50d8'),
    ruler: p('M2 7h20M2 3v8M22 3v8', 'none', '#3a50c8', 1.5) + p('M2 7l4-3v6zM22 7l-4-3v6z', '#3a50c8') + p('M1 14h22v7H1z', '#f5df5c', '#a98e2c') + p('M5 14v3M9 14v3M13 14v3M17 14v3', 'none', '#846c1c'),
    surf: p('M1 5q10-3 22-1l-3 16q-6-2-11 0Q7 9 1 5z', '#9fb6f0', '#3f55a8') + p('M9 4q4 7 4 15M16 4q2 8 1 15', 'none', '#e9effc'),
    surf2: p('M1 5q10-3 22-1l-3 16q-6-2-11 0Q7 9 1 5z', '#9fb6f0', '#3f55a8') + p('M9 4q4 7 4 15M16 4q2 8 1 15M5 9q8-3 17-1M8 15q6-2 13-1', 'none', '#fff'),
    surf3: p('M2 6q10-6 20-1l-1 15q-8-2-15 2z', '#c3cef8', '#4a3fd0', 1.5) + p('M8 4l3 16M15 3l1 17M3 12q9-4 18-1', 'none', '#5b50d8') + p('M8 9q5-3 8 0v6h-4l-4 3z', '#fff', '#333', 1.3),
    surf4: p('M1 8l8-6 12 2-9 17-8-1 3-9z', '#f4d8c4', '#c07450') + p('M4 6q7 2 5 14M9 3q7 3 3 17M4 13l12-2', 'none', '#c07450') + p('M15 21l6-6M21 12v5h-5', 'none', '#e07030', 2),
    surf5: p('M2 5l9 3q4-6 10-6l2 8q-7 1-9 7-5-4-10-3z', '#d0d0d0', '#555') + p('M8 17l5-4 7 2-2 6-6 1z', '#8d9af0', '#2a35b0'),
    surf6: p('M2 5l9-3 11 7-2 12-8-2L3 13z', '#d3d9fa', '#5a50d8') + p('M2 9l9-3 11 6M3 13l8-3 10 6M7 4l1 13M13 4v15', 'none', '#d04a5a'),
    sketch: p('M1 3h9v7H1zM5 14h9v7H5zM-6 14h9v7h-9z', '#fff', '#222', 1.5) + p('M12 13l8-9 3 3-9 8-3 1z', '#f0c850', '#7c6418'),
    extrude: p('M2 5l6-3h12v16l-5 4-12-2z', '#f3b058', '#b86c1c') + p('M2 5l13 2v15M6 5v16M10 6v15M15 7l5-5', 'none', '#b86c1c') + p('M22 20v-10M20 12l2-3 2 3', 'none', R),
    revolve: p('M2 4q10-4 20 0v5l-5 4v8h-4V4z', '#f3b058', '#b86c1c') + p('M2 4q10-4 10 0v18H8v-9L2 10z', '#7a95dc', '#3a4b88') + dash('M12 1v22', '#333'),
    hole: cube() + `<ellipse cx="8" cy="14" rx="3" ry="4" fill="#e8a03c" stroke="${R}"/>`,
    pocket: cube() + p('M5 11l6 1v7l-6-1z', '#e8a03c', R) + p('M8 13l3 1v4l-3-1z', '#fff'),
    emboss: p('M1 7l11-6 11 6v10l-11 6L1 17z', '#a9c2f4', '#4a63b0') + p('M1 7l11 6 11-6M12 13v10', 'none', '#4a63b0') + p('M5 9l3-1 4 4 5-5 3 1v4l-8 6-7-5z', '#f28a48', '#c85a1c'),
    pad: p('M5 4l4-3h12l-5 4z', '#f5c86a', '#b07c20') + p('M13 13V8h-3l3-4 3 4h-3z', '#ee8240', '#d06020') + p('M3 16l5-3h13l-4 4v4l-4 2H3z', '#a9b9f2', '#5768b4') + p('M3 17h13l5-4', 'none', '#5768b4'),
    patternPads: p('M1 14l9-6 13 6-9 8z', '#8aa6ec', '#4059a8') + [[6, 12], [11, 9], [11, 15], [16, 12]].map(q => p(`M${q[0] - 2} ${q[1]}v-5h5v5q-2 2-5 0z`, '#f1a53e', '#a45c14')).join(''),
    pattern: [[1, 2], [9, 4], [16, 6], [1, 11], [8, 13], [16, 15]].map(q => box(q[0], q[1], 6)).join('').replace(/#f4cf5e/g, '#f3ae4c').replace(/#b08a28/g, '#d8782c'),
    unite: p('M9 4l6-3v13l-6 5z', '#f1a53e', '#a45c14') + p('M2 12l6-2v8l-6-2z', '#f5c86a', '#a45c14') + p('M12 11l5-3 6 2v9l-6 3-5-2z', '#8aa6ec', '#4059a8'),
    book: p('M1 4q6-4 10 0 5-4 11 0v17h-7v-8h-6v8H1z', '#a9c2f4', '#4a63b0') + p('M4 3v18M8 3v10M15 3v18M19 3v18', 'none', '#e9effc') + p('M12 3v16', 'none', '#e07030'),
    shell: p('M1 8h13v12H1z', '#b8c7f6', '#3f4db0') + p('M1 8l5-4h16l-5 4z', '#f0b848', '#a45c14') + p('M14 8h7v12h-7z', '#f5c86a', R) + dash('M14 8l6-4M21 8v12'),
    draft: p('M8 6q5-5 12-4-3 6-5 18H1q7-6 7-14z', '#a9b9f2', '#4a5cb0') + p('M9 2l9 8M12 1l8 8', 'none', R, 1.5),
    blend: p('M1 12l12-7 10 6-11 8z', '#b8c7f6', '#6a7cd0') + p('M1 12v4l11 7v-4M12 23l11-7v-5', '#8aa0e8', '#6a7cd0') + p('M5 14l12-7', 'none', R, 1.5),
    thicken: p('M3 6l8-4 11 3v14l-9 4-4-3v-6l-6-2z', '#7d99e4', '#3a4b88') + p('M10 6l6-2v14l-6 3z', '#f5c86a', '#a45c14') + p('M2 18l6-3', 'none', '#ee8240', 3),
    offset: p('M1 6q9-5 15-3l-2 9q-6-1-12 3z', '#a9c8f4', '#4a63b0') + p('M1 12q8-4 14-1', 'none', '#f0b848', 2) + dash('M21 3v18') + p('M19 8l2-4 2 4zM19 16l2 4 2-4z', R),
    sew: p('M2 2q5 2 9 0v11q-5 2-9 0z', '#8aa6ec', '#4059a8') + p('M11 9q6 2 11 0v11q-6 3-11 1z', '#f3b558', '#a45c14') + p('M4 15l4 5M4 20h4v-4', 'none', '#ee8240', 2),
    trim: p('M3 9l8-6h10v11l-7 8H3z', '#dfe5fb', '#7b86d8') + dash('M3 9h11v13M14 9l7-6M1 9v13h13') + p('M8 18q0-9 8-9v9z', '#9fb3f2', '#5768b4'),
    faceblend: cube() + p('M2 7l9-5 11 3-6 2q-5 3-5 9L2 14z', '#f3ae4c', '#a45c14') + p('M2 7l9-5 9 2-8 3q-5 1-6 6l-4-1z', '#f8d48c'),
    bend: p('M13 2q6-2 9-1v14l-9 7z', '#a9c2f4', '#4a63b0') + p('M1 19q8 0 13-9l7 6q-5 7-13 7z', '#f7d98c', '#c08030'),
    wedge: p('M0 0h24v8H0z', '#bfeef2') + p('M1 8h12v14H1z', '#a4b9f0', '#6074c0') + p('M13 12l9-3v13h-9z', '#c9e0fa') + p('M2 7L12 2l11 5-10 7z', '#f0d860', '#b08818') + p('M4 9l9 5 9-5', 'none', '#ee7030', 2),
    wirecube: p('M7 6l5-3 5 3v8l-5 3-5-3z', '#9fc0f2', '#3f5cb0') + p('M7 6l5 3 5-3M12 9v8', 'none', '#3f5cb0') + p('M1 16L7 6M23 15L17 6M1 16l11 6 11-7-6-3M1 16l6-3', 'none', '#d86a4a', 1.5),
    line: p('M4 20L20 4', 'none', '#333', 1.5) + dot(4, 20) + dot(20, 4),
    arc: p('M3 4q17 0 18 16', 'none', '#333', 1.5) + dot(3, 4) + dot(16, 8) + dot(21, 20),
    spline: p('M2 12l6-1 3-8M8 11l8 1 6-6M16 12l1 8M11 3l5 17', 'none', '#777', 1.3) + [[3, 12], [7, 4], [17, 20], [21, 6]].map(q => dot(q[0], q[1], 2.2, '#888')).join('') + dot(8, 11) + dot(15, 12),
    loop: p('M3 20V12q1-8 9-9 5 0 5 5 5 2 5 7 0 5-5 6z', 'none', '#333', 1.5) + p('M7 17v-4q1-5 5-5 2 0 2 3 4 1 4 3 0 3-3 3z', 'none', R, 1.5),
    wave: p('M4 2q-4 4 1 6t5 2M3 14q-3 6 3 7h4l6-6 7 1M22 3q-5 0-5 6', 'none', '#333', 1.5) + dash('M11 3v16') + p('M12 9h3v6h2l-4 4-3-4h2z', '#f0902c'),
    project: p('M3 2l16 4', 'none', '#2a40d8', 2) + p('M12 4v10', 'none', R, 1.5) + p('M1 15q6-2 9-6l12 7q-4 4-8 6z', '#a9c2f4', '#3a4b88') + p('M8 12l8 6', 'none', R, 2),
    intersect: p('M1 12q8-1 10-6l12 6q-4 7-9 8z', '#b8c7f6', '#3a4b88') + p('M7 2l9 6v14l-8-7z', '#9fb3e8', '#3a4b88') + p('M7 8l9 8', 'none', '#e08030', 2),
    moveface: face + p('M15 9v14M8 16h14M12 12l3-4 3 4M12 20l3 4 3-4M11 13l-4 3 4 3M19 13l4 3-4 3', '#fff', '#333', 1.2),
    pullface: face + p('M16 6v14M13 11l3-6 3 6zM10 18l6-3 7 4-6 4z', '#fff', '#333', 1.2),
    copyface: face + p('M10 9h5v12h-5zM15 12h7v9h-7zM15 9l2-3h4v6', '#fff', '#333', 1.2),
    replace: p('M4 4h14v16q-7 4-14 0z', '#f5a030', '#b04848') + p('M6 4h4v17H6z', '#fde37c') + '<ellipse cx="11" cy="4" rx="7" ry="2.5" fill="#b06ad0" stroke="#7a3a9a"/>' + p('M11 22l6-11 6 11z', '#f0e4c8', '#333', 1.3),
    patface: face + p('M13 8h8l-2 4 3 2-2 3 2 2-3 4h-7l2-4-2-3 3-3z', '#fff', '#333', 1.2),
    delface: face + p('M10 10l12 12M22 10L10 22', 'none', '#333', 2.4),
    addcomp: box(0, 2) + box(0, 12) + box(7, 15) + p('M19 2v9M14 7h9', 'none', '#2a7ad8', 2),
    movecomp: box(7, 7, 11) + dash('M13 5l8-4M17 9l6-5M2 16l5 6', '#2a50a8') + p('M17 1h5v5M2 16v6h6', 'none', '#2a50a8', 1.6),
    mirror: p('M2 2l9 5-9 5zM22 2l-9 5 9 5z', '#2a20c8') + p('M2 15h8v8H2z', '#f5ec50', '#8c7c1c') + p('M14 13v10h9z', R, '#7c1c1c') + dash('M12 0v24', '#333'),
    explode: box(2, 1, 9) + box(2, 13, 9) + box(13, 13, 9),
    chain: '<g transform="rotate(-20 12 12)" fill="none"><rect x="8" y="1" width="7" height="11" rx="3" stroke="#9a8c2c" stroke-width="2"/><rect x="8" y="12" width="7" height="11" rx="3" stroke="#9a8c2c" stroke-width="2"/><path d="M11 6v12" stroke="#c8bc4c" stroke-width="2"/></g>',
    s1: p('M4 21L20 3', 'none', V, 1.8) + dot(4, 21) + dot(20, 3),
    s2: p('M9 2v14l13-4M9 16L3 12', 'none', '#aaa', 1.5) + p('M3 18l17 5M3 22l17-7', 'none', V, 1.4) + dot(3, 18) + dot(9, 15),
    s3: p('M2 20L17 2', 'none', V, 1.8) + dash('M8 21L22 4') + dot(3, 20),
    s4: p('M2 11l20 6', 'none', V, 1.8) + dash('M16 1L9 22') + dot(3, 11),
    s5: ring(17, 8, 5, R, '2 1.5') + p('M2 15L14 4', 'none', V, 1.8) + dot(3, 14) + dot(13, 5),
    s6: ring(17, 7, 4.5, R, '2 1.5') + ring(7, 17, 4.5, R, '2 1.5') + p('M3 12L14 3', 'none', V, 1.8) + dot(7, 9),
    s7: dash('M2 8q5-5 9 0t-5 12M11 13q2-6 6-1t6-6') + p('M4 17L15 6', 'none', V, 1.8) + dot(5, 17) + dot(15, 7),
    s8: dash('M3 20q-1-8 5-8t5 6 9-2') + p('M9 9l7-7', 'none', V, 1.8) + p('M15 1l5 1-3 4z', R) + dot(9, 9),
    s9: p('M3 4l18-2v18l-4 3H5z', '#8fb4e4', '#555') + p('M8 2v21M15 2v21M1 9h22M1 16h22', 'none', '#333') + dot(8, 9, 1.5),
    a1: p('M3 5q15 0 17 15', 'none', V, 1.8) + dot(3, 5) + dot(13, 9) + dot(20, 20),
    a2: p('M4 4q12 3 13 15', 'none', V, 1.8) + dash('M4 2l14 20 5-3') + dot(5, 7) + dot(17, 19),
    a3: dash('M3 3h18v18H3M18 3h6M18 21h6') + p('M8 3h3q9 1 9 9t-9 9H8', 'none', V, 1.5),
    a4: dash('M3 3h19v19') + p('M11 14l8-8', 'none', R, 1.5) + p('M15 3q6 1 7 8', 'none', V, 1.5) + dot(11, 14) + dot(18, 7, 2.5),
    c1: ring(12, 12, 9) + dot(10, 3) + dot(17, 5) + dot(21, 13) + dot(12, 12, 1, V),
    c2: ring(12, 14, 9) + dash('M11 1l12 12') + dot(16, 7) + dot(20, 17) + dot(12, 14, 1, V),
    c3: ring(12, 12, 9) + dash('M3 2h20M21 2v20H3') + dot(12, 12, 1.4, V),
    c4: ring(12, 12, 9) + dash('M3 2h18v20') + p('M12 12l6-6', 'none', R, 1.5) + dot(12, 12) + dot(17, 7),
    c5: ring(12, 12, 9) + dot(12, 12) + dot(21, 12),
    c6: ring(12, 12, 9) + dot(12, 13) + p('M12 13l5-6', 'none', R, 1.5) + p('M18 5v5l-4-4z', R),
    c7: ring(12, 13, 9) + dash('M12 1l11 11') + dot(12, 13) + dot(17, 5, 1.5),
    g0: ring(12, 12, 8, '#bbb'),
    g1: ring(10, 12, 8, '#999'),
    g2: p('M12 3v18M3 12h18', 'none', '#999', 1.5),
    g3: p('M4 20L20 4', 'none', '#999', 1.5) + dot(6, 18, 2, '#999'),
    g4: p('M3 8q5-7 18-4l-3 12q-6-2-8 4z', '#ececec', '#999') + ring(13, 9, 2, '#888'),
    g5: p('M5 3l14 3v15L5 18zM9 4v15M14 5v15M5 8l14 3M5 13l14 3', 'none', '#888'),
    pink: p('M1 1h22v22H1z', '#f5c0c0') + dot(12, 12, 5),
    ball: dot(12, 12, 9, '#666890'),
    blue: dot(12, 12, 11, '#3a60d8'),
    teal: dot(12, 12, 8, '#2a96a0'),
    red: dot(10, 8, 4) + dot(15, 16, 6, '#c08080'),
};
const svg = name => `<svg viewBox="0 0 24 24">${icons[name]}</svg>`;

// v = drop-down, | = separator, > = overflow, + starts a group with a grip
const bars = {
    bar1: ['LAUNCH v new open save | cut copy paste del | undo v redo | wcs v | FIND >', '+ fit v bracket v cube v frame v | section section2 >', '+ palette | showhide v | measure v ruler >', '+ surf surf2 surf3 surf4 surf5 surf6 >'],
    bar2: ['sketch extrude revolve hole pocket emboss | pad patternPads pattern unite book shell draft blend thicken offset sew trim | faceblend bend wedge wirecube >', '+ line arc spline loop wave project intersect >', '+ moveface pullface copyface replace patface delface >'],
    bar3: ['addcomp v addcomp movecomp* mirror | explode | chain >', '+ chain! | s1 s2 s3 s4 s5 s6 s7 s8 s9 | a1 a2 a3 a4 | c1 c2 c3 c4 | c5 c6 c7 >'],
    bar4: ['FILTER SMEAR v g0 g3 pink v red g3 | g0 v | ball blue SMEAR v teal g0 g3 g3 g2 g4 g1 g0 g1 g2 g3 g4 | g5'],
};
const special = {
    LAUNCH: '<button type="button" class="launch"><svg viewBox="0 0 20 26"><circle cx="6" cy="15" r="11" fill="#58b8d8"/><path d="M6 10q10 4 12-4 1 14-12 19-5-6 0-15z" fill="#f0c030"/><path d="M-2 4h14l-5 10z" fill="#d83c30"/><path d="M4 12l5 6 5-12 3 0-6 18z" fill="#2f8f4f"/></svg>启动</button>',
    FIND: '<span class="finder"><input type="text" placeholder="查找命令" aria-label="查找命令"><svg viewBox="0 0 16 16"><circle cx="10" cy="6" r="4" fill="none" stroke="#444" stroke-width="2"/><path d="M7 9l-5 6" stroke="#444" stroke-width="2"/></svg></span>',
    FILTER: '<select class="filter" aria-label="类型过滤器"><option>实体</option></select>',
    SMEAR: '<i class="smear"></i>',
    v: '<i class="caret"></i>',
    '|': '<i class="sep"></i>',
    '>': '<i class="more"></i>',
    '+': '<i class="grip"></i>',
};

function renderBars() {
    for (const [id, groups] of Object.entries(bars)) {
        document.getElementById(id).innerHTML = groups.map(group => {
            const items = group.split(' ').map(item => {
                if (special[item]) return special[item];
                const state = item.endsWith('*') ? ' hot' : item.endsWith('!') ? ' on' : '';
                const name = item.replace(/[*!]/, '');
                return `<button type="button" class="tool${state}" aria-label="${name}">${svg(name)}</button>`;
            });
            return `<div class="group">${items.join('')}</div>`;
        }).join('');
    }
}

function renderMenu() {
    const menus = [['文件', 'F'], ['编辑', 'E'], ['视图', 'V'], ['插入', 'S'], ['格式', 'R'], ['工具', 'T'], ['装配', 'A'], ['信息', 'I'], ['分析', 'L'], ['首选项', 'P'], ['窗口', 'O'], ['GC工具箱'], ['帮助', 'H']];
    document.getElementById('menubar').innerHTML += menus.map(([name, key]) =>
        `<button type="button">${name}${key ? `(<u>${key}</u>)` : ''}</button>`).join('');
}

function renderResources() {
    const items = [
        ['', ring(4, 12, 7, '#333') + ring(4, 12, 3, '#333')],
        ['current', box(-5, 0, 11) + box(7, 14, 10) + p('M9 12h8M0 18h6', 'none', '#222', 1.5)],
        ['mid', p('M16 3v10L6 8z', '#2a20e8') + p('M6 14v9h11z', '#d82020', '#222') + dash('M4 0v24', '#111') + p('M0 15h3v8h-3z', '#e8a030')],
        ['mid', p('M0 2h4v9H0z', '#b8408c') + p('M5 10h12M0 18h6', 'none', '#222', 1.5) + ring(11, 18, 5, '#9a3a8a') + ring(11, 18, 2, '#9a3a8a')],
        ['mid', p('M0 4l4-3v19l-4 3z', '#3cc83c', '#1a7c1a') + p('M5 5l5-4h7v17l-5 5H5z', '#3a8ce0', '#1c4c94') + p('M5 10h7M5 15h7M12 5v17', 'none', '#c8e0fa')],
        ['tall', p('M0 5q12 0 13 16M0 0q17 0 17 18', 'none', '#3a70d0', 2.5) + dot(1, 16, 8, '#2a80e0') + p('M2 13v8', 'none', '#fff', 2)],
        ['tall', p('M-4 1h14l6 6v16H-4z', '#fff', '#4a78b8', 1.5) + dot(4, 14, 7, '#3c90d8') + p('M0 10l6 1 1 6-5 3z', '#4cb84c')],
        ['tall', `<circle cx="3" cy="12" r="12" fill="#cfe0f0" stroke="#556" stroke-width="2"/>` + p('M4 4v9h7', 'none', '#222', 2)],
        ['', p('M0 4h2v16H0z', '#3cf0c8') + p('M3 8l10 14', 'none', '#222', 3) + p('M0 1l4 4-4 4z', '#f07070')],
        ['', p('M0 4h16l-3 4H0M0 10h13', 'none', '#3a70d0', 2) + p('M2 5l11 15', 'none', '#222', 3)],
        ['', p('M0 4q8-4 13 1l-3 2M2 20l6-14', 'none', '#666', 2.5) + p('M1 10l9 10', 'none', '#99a', 3)],
        ['', p('M-4 1h20v22H-4z', '#fff', '#888') + p('M0 4h13v14H0z', '#e03030') + p('M3 4h8v9l2 5H1l2-5z', '#5aa8f0') + p('M4 4l3 5 3-5z', '#fff')],
    ];
    document.getElementById('resources').innerHTML = items.map(([size, art]) =>
        `<button type="button" class="resource ${size}" aria-label="资源条"><svg viewBox="0 0 17 24">${art}</svg></button>`).join('');
}

function renderTree() {
    const part = `<svg viewBox="0 0 24 24">${box(3, 0, 12)}${box(0, 11, 12)}${box(12, 11, 12)}</svg>`;
    const folder = '<svg class="folder" viewBox="0 0 16 16"><path d="M1 13V3h5l1 2h6v3" fill="#f0b830" stroke="#8c6410"/><path d="M1 14l3-6h12l-3 6z" fill="#fbdc78" stroke="#8c6410"/></svg>';
    const tick = grey => `<input type="checkbox" checked ${grey ? 'disabled' : ''} aria-label="组件">`;
    const blank = '<span class="cell none"></span>';
    let rows = `<div class="tree-row"><span class="cell start twig"></span>${folder}截面</div>`;
    rows += `<div class="tree-row"><span class="cell end"><i class="toggle"></i></span>${tick(false)}${part}</div>`;
    // G = grey tick, R = red tick, M = red tick on an open assembly
    for (const c of 'GRRRGRM') {
        rows += `<div class="tree-row">${blank}<span class="cell"><i class="toggle${c === 'M' ? '' : ' plus'}"></i></span>${tick(c === 'G')}${part}</div>`;
    }
    for (const c of '++.+...e') {
        const inner = c === '+' ? '<i class="toggle plus"></i>' : '';
        rows += `<div class="tree-row">${blank}<span class="cell"></span><span class="cell ${c === 'e' ? 'end' : ''} ${inner ? '' : 'twig'}">${inner}</span></div>`;
    }
    const tail = 'gggrrrrrrrrrrrrrrr';
    [...tail].forEach((c, i) => {
        rows += `<div class="tree-row">${blank}<span class="cell twig ${i === tail.length - 1 ? 'end' : ''}"></span>${tick(c === 'g')}${part}</div>`;
    });
    rows += '<div class="tree-row"></div>'.repeat(3);
    document.getElementById('tree').innerHTML = rows;
}

const sp = n => ' '.repeat(n);
const report = [
    '当前工作部件： F:\\工作备份\\2017\\全盛\\V302\\工作站\\重庆全盛天吊水平回转2018-1-21\\2018-1-21水平回转系统修改',
    '节点名' + sp(22) + '： pc-20181005adwl',
    '='.repeat(60),
    '测量质量属性',
    '',
    '显示的质量属性值',
    '体积' + sp(26) + '= 514514642.133388940 mm^3',
    '面积' + sp(26) + '= 107985186.684472750 mm^2',
    '质量' + sp(26) + '= 4028.978937275 kg',
    '重量' + sp(26) + '= 39510.786295232 N',
    '回转半径' + sp(20) + '= 1317.038640483 mm',
    '质心' + sp(26) + '=   22.136489259, -149.848675663,  121.219870087 mm',
    '',
    '='.repeat(60),
    '详细的质量属性',
    '使用精度计算的分析' + sp(4) + '0.990000000',
    '信息单位' + sp(5) + 'kg - mm',
    '',
    '密度' + sp(16) + '=    0.000007831',
    '体积' + sp(16) + '= 514514642.133388940',
    '面积' + sp(16) + '= 107985186.684472750',
    '质量' + sp(16) + '= 4028.978937275',
    '',
    '一阶矩',
    'Mx, My, Mz            = 89187.448971449, -603737.158024418, 488392.303360391',
    '',
    '质心',
    'Xcbar, Ycbar, Zcbar   =   22.136489259, -149.848675663,  121.219870087',
    '',
    '惯性矩 (WCS)',
    'Ix, Iy, Iz            = 4402482272.202971500, 2951078216.438705000, 6926991674.718742400',
    '',
    '惯性矩（质心）',
    'Ixc, Iyc, Izc         = 4252810207.059620400, 2889901067.867562300, 6834548164.134071400',
    '',
    '惯性矩（球坐标）',
    'I                     = 6988629719.530627300',
    '',
    '惯性积 (WCS)',
    'Iyz, Ixz, Ixy         = -115051975.578250970, -4093788.895211560, -286895945.642880980',
    '',
    '惯性积（质心）',
    'Iyzc, Ixzc, Ixyc      = -41867035.715745248, -14905079.872934988, -273531324.528757270',
];

// the listing is set on an 8px column grid, full-width characters take 13px
function renderReport() {
    const listing = document.getElementById('listing');
    for (const text of report) {
        const line = document.createElement('div');
        line.className = /[\u4e00-\u9fff]/.test(text) ? 'line cjk' : 'line';
        for (const run of text.match(/[^\x00-\x7f]+|[\x21-\x7e]+| +/g) || []) {
            const span = document.createElement('span');
            span.className = 'run';
            span.textContent = run;
            span.style.width = run.length * (run.charCodeAt(0) > 127 ? 13 : 8) + 'px';
            line.appendChild(span);
        }
        listing.appendChild(line);
    }
}

// machinery mounted on the frames: [x, y, w, h]
function renderLumps() {
    const parts = [
        [1106, 422, 24, 23], [1138, 404, 12, 22], [1140, 424, 12, 60], [1148, 418, 12, 10], [1146, 434, 10, 10], [1122, 448, 22, 12], [1136, 470, 20, 26], [1125, 488, 40, 16], [1158, 474, 16, 16], [1138, 508, 12, 16],
        [1212, 424, 18, 12], [1230, 410, 8, 30], [1224, 440, 24, 26], [1211, 442, 12, 11], [1210, 464, 20, 12], [1254, 404, 22, 14], [1252, 424, 22, 12], [1244, 440, 14, 10], [1254, 454, 26, 8], [1218, 480, 22, 10], [1228, 490, 14, 14], [1256, 474, 18, 20], [1240, 484, 12, 10], [1232, 470, 12, 20],
        [1101, 545, 24, 20], [1138, 544, 12, 60], [1128, 556, 28, 16], [1120, 574, 26, 14], [1115, 592, 34, 24], [1130, 582, 18, 30], [1208, 534, 24, 20], [1236, 530, 12, 30], [1228, 558, 26, 14], [1232, 570, 14, 34], [1214, 594, 28, 12], [1246, 536, 20, 8], [1254, 556, 12, 10], [1240, 596, 30, 10], [1222, 574, 14, 12],
        [1124, 640, 20, 12], [1146, 634, 12, 20], [1100, 652, 22, 24], [1138, 658, 22, 20], [1118, 682, 20, 8], [1138, 680, 20, 40], [1102, 698, 22, 36], [1156, 690, 14, 20], [1134, 716, 60, 22], [1170, 680, 22, 50], [1146, 734, 14, 18], [1156, 700, 20, 20],
        [1232, 670, 14, 14], [1244, 664, 12, 12], [1242, 684, 14, 26], [1252, 674, 14, 14], [1228, 710, 20, 34], [1260, 708, 14, 12], [1250, 722, 20, 16], [1262, 656, 12, 10], [1264, 690, 12, 8],
        [1588, 410, 9, 48], [1578, 430, 18, 10], [1590, 440, 34, 12], [1602, 426, 16, 12], [1622, 414, 18, 34], [1640, 420, 18, 20], [1612, 448, 52, 10], [1658, 434, 20, 22], [1676, 444, 8, 8], [1528, 482, 30, 50], [1560, 474, 22, 10], [1590, 484, 30, 18], [1586, 504, 36, 16], [1600, 470, 18, 14], [1634, 486, 16, 14], [1638, 500, 26, 16], [1656, 486, 20, 10], [1656, 504, 20, 9], [1576, 558, 30, 8], [1590, 556, 9, 30], [1620, 556, 12, 24], [1634, 560, 20, 14],
        [1498, 651, 26, 52], [1514, 616, 24, 18], [1508, 624, 20, 12], [1520, 636, 40, 8], [1538, 642, 34, 6], [1516, 656, 8, 46], [1540, 660, 10, 10], [1558, 656, 12, 50], [1574, 640, 26, 18], [1578, 628, 30, 10], [1588, 620, 12, 20], [1576, 660, 24, 14], [1580, 674, 44, 14], [1606, 662, 34, 12], [1618, 664, 36, 34], [1574, 694, 24, 16], [1590, 700, 14, 30], [1578, 716, 30, 10], [1520, 704, 40, 9], [1508, 722, 30, 14], [1516, 714, 20, 26], [1636, 632, 10, 22], [1632, 714, 12, 16], [1664, 660, 20, 36], [1640, 624, 6, 16], [1600, 642, 7, 22], [1560, 720, 18, 8], [1572, 598, 10, 14],
        [1700, 674, 22, 13],
    ];
    let out = parts.map(([x, y, w, h]) => `<rect x="${x}" y="${y}" width="${w}" height="${h}" rx="3"/>`).join('');
    const bolts = [[1327, 534], [1337, 534], [1328, 561], [1323, 577], [1323, 594], [1328, 609], [1336, 622], [1450, 622], [1466, 609], [1472, 594], [1471, 577], [1359, 634], [1110, 408], [1176, 408], [1110, 520], [1176, 520], [1106, 629], [1198, 629], [1106, 750], [1198, 750], [1268, 620], [1198, 427],
        [1526, 418], [1526, 430], [1526, 458], [1526, 484], [1526, 510], [1526, 538], [1526, 560], [1526, 578], [1686, 418], [1686, 430], [1686, 458], [1686, 484], [1686, 538], [1686, 560], [1686, 578], [1539, 414], [1672, 414], [1539, 580], [1672, 580], [1504, 608], [1690, 608], [1504, 748], [1690, 748], [1682, 642], [1682, 708], [1682, 722], [1684, 736]];
    out += bolts.map(([x, y], i) => `<circle cx="${x}" cy="${y}" r="${i > 34 ? 4 : 3}"/>`).join('');
    // hose arm reaching over the edge of the left frame
    out += '<path d="M1250 458l30-11 6 2-2 5-32 10z"/>';
    document.getElementById('lumps').innerHTML = out;
}

renderMenu();
renderBars();
renderResources();
renderTree();
renderReport();
renderLumps();
```
